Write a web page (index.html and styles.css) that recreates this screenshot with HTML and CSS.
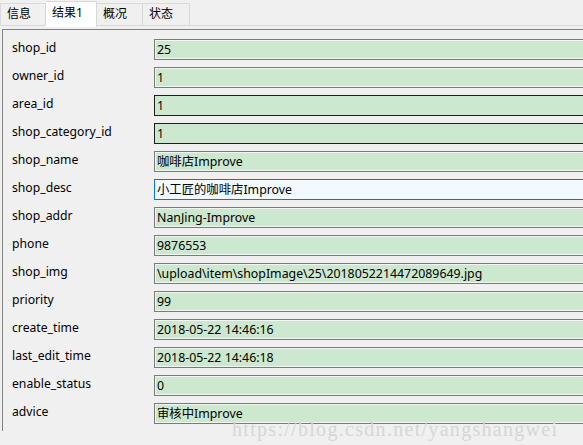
FILE: index.html
```html
<!DOCTYPE html>
<html>
<head>
<meta charset="utf-8">
<link rel="stylesheet" href="styles.css">
</head>
<body>
<div class="tabbar">
  <div class="tab t1">信息</div>
  <div class="tab t2 active">结果1</div>
  <div class="tab t3">概况</div>
  <div class="tab t4">状态</div>
</div>
<div class="panel">
  <div class="row"><span class="label">shop_id</span><div class="field">25</div></div>
  <div class="row"><span class="label">owner_id</span><div class="field">1</div></div>
  <div class="row"><span class="label">area_id</span><div class="field dark">1</div></div>
  <div class="row"><span class="label">shop_category_id</span><div class="field dark">1</div></div>
  <div class="row"><span class="label">shop_name</span><div class="field">咖啡店Improve</div></div>
  <div class="row"><span class="label">shop_desc</span><div class="field focus">小工匠的咖啡店Improve</div></div>
  <div class="row"><span class="label">shop_addr</span><div class="field">NanJing-Improve</div></div>
  <div class="row"><span class="label">phone</span><div class="field">9876553</div></div>
  <div class="row"><span class="label">shop_img</span><div class="field">\upload\item\shopImage\25\2018052214472089649.jpg</div></div>
  <div class="row"><span class="label">priority</span><div class="field">99</div></div>
  <div class="row"><span class="label">create_time</span><div class="field">2018-05-22 14:46:16</div></div>
  <div class="row"><span class="label">last_edit_time</span><div class="field">2018-05-22 14:46:18</div></div>
  <div class="row"><span class="label">enable_status</span><div class="field">0</div></div>
  <div class="row"><span class="label">advice</span><div class="field">审核中Improve</div></div>
</div>
<div class="watermark">https://blog.csdn.net/yangshangwei</div>
</body>
</html>
```
FILE: styles.css
```css
html, body {
  margin: 0;
  padding: 0;
  width: 583px;
  height: 445px;
  overflow: hidden;
  background: #f0f0f0;
  font-family: "Noto Sans", "Noto Sans CJK SC", sans-serif;
  font-size: 12px;
  color: #000;
  position: relative;
}
.tabbar {
  display: flex;
  height: 25px;
  border-bottom: 1px solid #d9d9d9;
}
.tab {
  box-sizing: border-box;
  margin-top: 3px;
  height: 22px;
  border: 1px solid #d9d9d9;
  border-bottom: 0;
  border-left: 0;
  padding-left: 6px;
  line-height: 20px;
  background: #f0f0f0;
}
.t1 { width: 46px; border-left: 1px solid #d9d9d9; }
.t2 { width: 51px; }
.t3 { width: 46px; }
.t4 { width: 47px; }
.tab.active {
  margin-top: 1px;
  height: 26px;
  background: #fff;
  border-left: 0;
  line-height: 22px;
  position: relative;
  z-index: 1;
}
.panel {
  margin: 3px 0 0 2px;
  width: 580px;
  overflow: hidden;
  border-top: 1px solid #828282;
  border-left: 1px solid #828282;
  padding-top: 9px;
}
.row {
  display: flex;
  align-items: flex-start;
  height: 28px;
}
.label {
  box-sizing: border-box;
  flex: 0 0 151px;
  padding-left: 9px;
  line-height: 18px;
  font-size: 12.2px;
}
.field {
  box-sizing: border-box;
  flex: 0 0 520px;
  height: 21px;
  border: 1px solid #7a7a7a;
  box-shadow: inset 0 0 0 1px #f4f4f4;
  background: #cce8cf;
  padding-left: 2px;
  line-height: 19px;
  font-size: 12.35px;
  white-space: nowrap;
}
.field.dark {
  border-color: #1e1e1e;
  box-shadow: none;
}
.field.focus {
  border-color: #0078d7;
  box-shadow: none;
  background: #f3f9ff;
}
.watermark {
  position: absolute;
  left: 232px;
  top: 418px;
  font-family: "Liberation Serif", serif;
  font-size: 20px;
  color: #d6d6d6;
  letter-spacing: 1.3px;
}
```
